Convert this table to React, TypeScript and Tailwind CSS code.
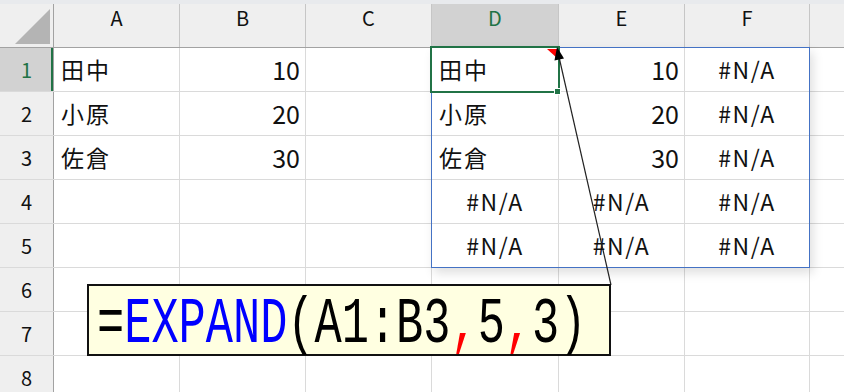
import React from "react";

type Cell = { text: string; align?: "left" | "right" | "center" };

const columns = [
  { key: "A", width: "w-[126px]" },
  { key: "B", width: "w-[126px]" },
  { key: "C", width: "w-[126px]" },
  { key: "D", width: "w-[127px]" },
  { key: "E", width: "w-[126px]" },
  { key: "F", width: "w-[125px]" },
];

const na: Cell = { text: "#N/A", align: "center" };
const empty: Cell = { text: "" };

const rows: Cell[][] = [
  [{ text: "田中" }, { text: "10", align: "right" }, empty, { text: "田中" }, { text: "10", align: "right" }, na],
  [{ text: "小原" }, { text: "20", align: "right" }, empty, { text: "小原" }, { text: "20", align: "right" }, na],
  [{ text: "佐倉" }, { text: "30", align: "right" }, empty, { text: "佐倉" }, { text: "30", align: "right" }, na],
  [empty, empty, empty, na, na, na],
  [empty, empty, empty, na, na, na],
  [empty, empty, empty, empty, empty, empty],
  [empty, empty, empty, empty, empty, empty],
  [empty, empty, empty, empty, empty, empty],
];

const CellBox: React.FC<{ cell: Cell; width: string }> = ({ cell, width }) => {
  const isNum = cell.align === "right";
  const isNa = cell.align === "center";
  return (
    <div
      className={
        width +
        " shrink-0 flex items-center border-r border-[#dadada] " +
        (isNum ? "justify-end pr-[5px] text-[25px]" : isNa ? "justify-center text-[23px] tracking-[1.5px]" : "justify-start pl-[7px] text-[23px] tracking-[2px]")
      }
    >
      <span className="text-[#111]">{cell.text}</span>
    </div>
  );
};

export default function App() {
  return (
    <div
      className="relative w-[844px] h-[392px] overflow-hidden bg-white"
      style={{ fontFamily: '"Noto Sans CJK JP", "Noto Sans", sans-serif' }}
    >
      <div className="h-[4px] bg-[#e8eaed]" />

      {/* column headers */}
      <div className="flex h-[44px] bg-[#efefef] border-b border-[#a2a2a2]">
        <div className="w-[54px] shrink-0 border-r border-[#a2a2a2] relative">
          <svg width="53" height="43" className="absolute left-0 top-0">
            <polygon points="15,40 50,5 50,40" fill="#b4b4b4" />
          </svg>
        </div>
        {columns.map((c) => (
          <div
            key={c.key}
            className={
              c.width +
              " shrink-0 flex justify-center pt-[4px] text-[20px] leading-[20px] border-r border-[#c6c6c6] " +
              (c.key === "D" ? "bg-[#d2d2d2] text-[#217346]" : "text-[#111]")
            }
          >
            {c.key}
          </div>
        ))}
        <div className="flex-1" />
      </div>

      {/* rows */}
      {rows.map((r, i) => (
        <div key={i} className="flex h-[44px] border-b border-[#dadada]">
          <div
            className={
              "w-[54px] shrink-0 flex items-center justify-center text-[20px] border-r border-[#a2a2a2] " +
              (i === 0 ? "bg-[#d2d2d2] text-[#217346] shadow-[inset_-2px_0_0_#217346]" : "bg-[#efefef] text-[#111]")
            }
          >
            {i + 1}
          </div>
          {r.map((cell, j) => (
            <CellBox key={j} cell={cell} width={columns[j].width} />
          ))}
          <div className="flex-1" />
        </div>
      ))}

      {/* spill range */}
      <div className="absolute left-[431px] top-[47px] w-[379px] h-[221px] border border-[#4472c4] shadow-[3px_5px_10px_rgba(0,0,0,0.13)]" />

      {/* active cell */}
      <div className="absolute left-[430px] top-[46px] w-[130px] h-[47px] border-2 border-[#217346]" />
      <div className="absolute left-[554px] top-[88px] w-[7px] h-[7px] bg-[#217346] border border-white" />

      {/* marker and arrow */}
      <svg className="absolute left-0 top-0 pointer-events-none" width="844" height="392">
        <polygon points="547,49 557,49 557,58" fill="#ff0000" />
        <line x1="559" y1="57" x2="611" y2="285" stroke="#222" strokeWidth="1.2" />
        <polygon points="557,47 564,58.5 554.5,60.5" fill="#000" />
      </svg>

      {/* formula callout */}
      <div className="absolute left-[87px] top-[284px] w-[524px] h-[72px] border-2 border-[#111] bg-[#ffffe1] pl-[8px] pt-[7px] overflow-visible">
        <span
          className="inline-block origin-left scale-x-[0.697] whitespace-nowrap text-[65px] leading-[65px] text-black"
          style={{ fontFamily: '"Liberation Mono", "DejaVu Sans Mono", monospace' }}
        >
          =<span className="text-[#0000ff]">EXPAND</span>(A1:B3<span className="text-[#ff0000]">,</span>5<span className="text-[#ff0000]">,</span>3)
        </span>
      </div>
    </div>
  );
}
